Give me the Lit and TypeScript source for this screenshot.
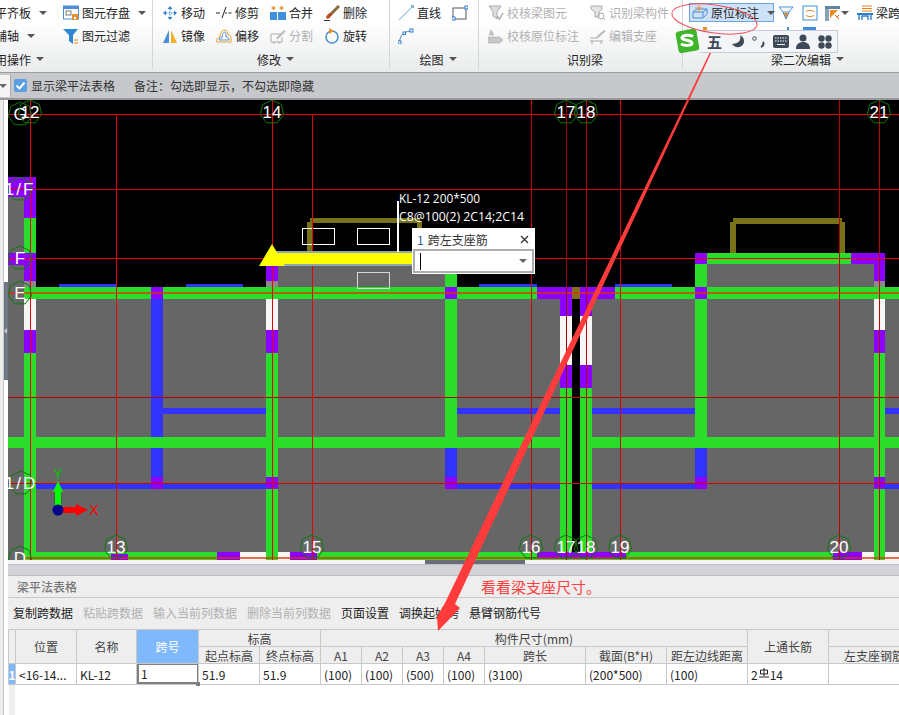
import { LitElement, css, html, svg } from 'lit';
import { customElement } from 'lit/decorators.js';

const G = '#2bdc2b';
const P = '#8c00ff';
const B = '#3333ff';
const W = '#f6f6f6';
const K = '#8a8a8a';
const Y = '#7a7218';

// x, y, w, h, fill in page coordinates
const blocks: [number, number, number, number, string][] = [
  // concrete
  [8, 197, 16, 363, '#666'], [24, 287, 548, 273, '#666'], [580, 287, 319, 273, '#666'],
  [278, 264, 167, 24, '#666'], [707, 264, 167, 24, '#666'],
  // olive frames
  [307, 222, 5, 30, Y], [310, 218, 110, 5, Y], [417, 222, 5, 30, Y],
  [730, 222, 6, 31, Y], [733, 218, 109, 6, Y], [839, 222, 6, 31, Y],
  // blue caps over beam E
  [59, 284, 57, 3, B], [186, 284, 57, 3, B], [479, 284, 58, 3, B], [615, 284, 57, 3, B],
  // main beams
  [24, 287, 875, 12, G], [8, 437, 552, 11, G], [592, 437, 307, 11, G], [24, 552, 875, 8, G],
  [707, 253, 144, 11, G],
  // column at 24
  [8, 177, 28, 20, P], [24, 197, 12, 21, P], [24, 218, 12, 35, G], [8, 253, 28, 12, P], [24, 265, 12, 16, P],
  [24, 281, 12, 6, K], [24, 299, 12, 31, W], [24, 330, 12, 23, P], [24, 353, 12, 199, G],
  // column at 151
  [151, 287, 12, 12, P], [151, 299, 12, 138, B], [151, 448, 12, 29, B], [151, 477, 12, 12, P],
  // column at 266
  [266, 265, 12, 16, P], [266, 281, 12, 6, K], [266, 299, 12, 31, W], [266, 330, 12, 23, P],
  [266, 353, 12, 124, G], [266, 477, 12, 12, P], [266, 489, 12, 63, G],
  // column at 445
  [445, 264, 12, 23, G], [445, 287, 12, 12, P], [445, 299, 12, 138, G], [445, 448, 12, 29, B], [445, 477, 12, 12, P],
  // twin columns on the channel
  [537, 287, 35, 12, P], [580, 287, 35, 12, P], [572, 287, 8, 12, '#807020'],
  [560, 299, 12, 17, P], [560, 316, 12, 49, W], [560, 365, 12, 23, P], [560, 388, 12, 164, G],
  [580, 299, 12, 17, P], [580, 316, 12, 49, W], [580, 365, 12, 23, P], [580, 388, 12, 164, G],
  // column at 695
  [695, 253, 12, 11, P], [695, 264, 12, 23, G], [695, 287, 12, 12, P], [695, 299, 12, 138, G],
  [695, 448, 12, 29, B], [695, 477, 12, 12, P],
  // column at 874
  [851, 253, 34, 11, P], [874, 264, 11, 17, P], [874, 281, 11, 6, K], [874, 299, 11, 31, W],
  [874, 330, 11, 23, P], [874, 353, 11, 124, G], [874, 477, 11, 12, P], [874, 489, 11, 63, G],
  // thin blue beams
  [163, 408, 103, 6, B], [457, 408, 103, 6, B], [592, 408, 103, 6, B], [885, 408, 14, 6, B],
  [36, 483, 115, 6, B], [163, 483, 103, 6, B], [457, 483, 103, 6, B], [592, 483, 103, 6, B], [885, 483, 14, 6, B],
  // bottom edge pieces
  [111, 554, 17, 6, P], [217, 552, 23, 8, P], [240, 552, 26, 8, W], [278, 552, 12, 8, W], [290, 552, 27, 8, P],
  [537, 552, 89, 7, P], [833, 552, 29, 8, P], [862, 552, 12, 8, W], [885, 552, 14, 8, W],
];

const hLines: [number, string][] = [
  [114, '#f00000'], [189, '#d80000'], [258, '#f00000'], [397, '#b00000'], [483, '#d00000'],
];
const vLines: [number, number, string][] = [
  [30, 100, '#e80000'], [116, 114, '#e80000'], [272, 100, '#e80000'], [312, 114, '#e80000'], [531, 100, '#c80000'],
  [566, 100, '#980000'], [586, 100, '#c00000'], [620, 100, '#d00000'], [839, 100, '#b80000'], [879, 100, '#c00000'],
];

const bubbles: [string, number, number][] = [
  ['G', 20, 114], ['12', 30, 112], ['14', 272, 112], ['17', 566, 112], ['18', 586, 112], ['21', 879, 112],
  ['1/F', 20, 189], ['F', 20, 258], ['E', 20, 293], ['1/D', 21, 483], ['D', 20, 558],
  ['13', 116, 547], ['15', 312, 547], ['16', 531, 547], ['17', 566, 547], ['18', 586, 547], ['19', 620, 547], ['20', 839, 547],
];

const hept = (cx: number, cy: number, r = 12) =>
  Array.from({ length: 7 }, (_, i) => {
    const a = -Math.PI / 2 + (i * 2 * Math.PI) / 7;
    return `${(cx + r * Math.cos(a)).toFixed(1)},${(cy + r * Math.sin(a)).toFixed(1)}`;
  }).join(' ');

const ic = (body: unknown, size = 16) =>
  html`<svg class="ic" width=${size} height=${size} viewBox="0 0 16 16" fill="none">${body}</svg>`;

const icons: Record<string, unknown> = {
  save: ic(svg`<rect x=".5" y="1" width="15" height="13" fill="#fff" stroke="#4a8fd8"/><rect x=".5" y="1" width="15" height="3" fill="#4a8fd8"/><rect x="3" y="6" width="5" height="4" stroke="#7a7a7a"/><rect x="9" y="9" width="6" height="6" fill="#e8912d"/><rect x="11" y="12" width="2" height="2" fill="#fff"/>`),
  filter: ic(svg`<path d="M0 1h15l-5 6v9l-4-3V7z" fill="#2f86d6"/><path d="M11 12h4M11 15h4" stroke="#f08a1c"/>`),
  move: ic(svg`<path d="M8 1l2.500 3h-5zM8 15l2.500-3h-5zM1 8l3-2.500v5zM15 8l-3-2.500v5z" fill="#2f7fd0"/><path d="M8 4v8M4 8h8" stroke="#2f7fd0" stroke-dasharray="1.500 1"/>`),
  trim: ic(svg`<path d="M0 8h4M6 13l4-11M9 8h2M12.500 8h3" stroke="#222"/>`),
  merge: ic(svg`<rect x="0" y="7" width="7" height="8" fill="#3f8fdc"/><rect x="8" y="7" width="8" height="8" fill="#3f8fdc"/><path d="M3.500 1v4M1.500 3h4M11.500 1v4M9.500 3h4" stroke="#e8912d" stroke-width="1.400"/>`),
  del: ic(svg`<path d="M15 1L6 10" stroke="#8a6a3a" stroke-width="3"/><path d="M6 8l2 2-3 3.500H2c0-2 1-4 4-5.500z" fill="#c0481c"/><path d="M0 15.500h6" stroke="#333"/>`),
  mirror: ic(svg`<path d="M7 2v13H1z" fill="#4a8fd8"/><path d="M9 2v13h6z" fill="#f4b024"/>`),
  offset: ic(svg`<path d="M1 14c-1-3 1-5 3-5 0-4 2-7 5-7 2 0 3 2 3 5 2 0 3 1 3 3v4z" stroke="#e8a020" fill="#fff"/><path d="M3 12c0-2 1-2 3-2 0-3 1-6 3-6 1 0 1 2 1 5 2 0 3 0 3 3z" stroke="#4a8fd8"/>`),
  split: ic(svg`<path d="M1 6h10M1 6v8h11V9M4 14v2M9 14v2" stroke="#aaa"/><path d="M6 10l8-8 1.500 1.500-8 8z" fill="#bbb"/>`),
  rotate: ic(svg`<circle cx="8" cy="9" r="6" stroke="#4a90d9" stroke-width="1.500"/><path d="M5 0l5 3-5 3z" fill="#f09020"/>`),
  line: ic(svg`<path d="M1 15L14 2" stroke="#a8c6e4" stroke-width="1.200"/><rect x="13" y="0" width="3" height="3" fill="#8ab4dc"/>`),
  arc: ic(svg`<path d="M1.500 14C2 8 5 4 12 3" stroke="#4a7fb8"/><rect x="0" y="13" width="3" height="3" fill="#fff" stroke="#2f7fd0"/><rect x="5" y="4" width="2.500" height="2.500" fill="#fff" stroke="#2f7fd0"/><rect x="12" y="1" width="3" height="3" fill="#fff" stroke="#2f7fd0"/>`),
  rect: ic(svg`<rect x="1" y="3" width="13" height="11" stroke="#556"/><rect x="0" y="12" width="3" height="3" fill="#fff" stroke="#2f7fd0"/><rect x="13" y="1" width="3" height="3" fill="#fff" stroke="#2f7fd0"/>`),
  chk1: ic(svg`<path d="M1 1h12l-4 6v7l-4-3V7z" stroke="#aaa" fill="#ddd"/><path d="M9 11l2.500 3L15 8" stroke="#aaa" stroke-width="1.400"/>`),
  chk2: ic(svg`<path d="M1 1h11v3l-3 3v5H5V7L1 4z" stroke="#aaa" fill="#e4e4e4"/><circle cx="11" cy="11" r="3" stroke="#aaa"/><path d="M13 13l2 2" stroke="#aaa"/>`),
  chk3: ic(svg`<path d="M3 2l3 5H1zM0 9h12l3 3-3 3H0z" fill="#c8c8c8" stroke="#aaa" stroke-width=".6"/>`),
  edit: ic(svg`<path d="M0 10h7M0 13h13M2 13v3M11 13v3" stroke="#aaa"/><path d="M6 9l8-7 1.500 1.500-8 7z" fill="#bbb"/>`),
  mark: ic(svg`<path d="M1 7l4-3h10v5l-4 4H1z" fill="#cfe0f2" stroke="#4a8fd8"/><path d="M1 7h10v6M11 7l4-3" stroke="#4a8fd8"/><path d="M7 0v7M3 3h8" stroke="#e8912d"/>`),
  funnel: ic(svg`<path d="M1 2h14l-4 5H5z" fill="#fff" stroke="#4a8fd8"/><path d="M5 8h6l-3 6z" fill="#f08a1c"/><path d="M5 7l3 7 3-7" stroke="#4a8fd8"/>`),
  box: ic(svg`<rect x="1" y="1" width="14" height="14" fill="#fff" stroke="#3f8fdc"/><path d="M4 7c0-2 8-2 8 0M4 10c0 2 8 2 8 0" stroke="#e8801c"/>`),
  corner: ic(svg`<rect x="0" y="1" width="4" height="15" fill="#8aa2b8"/><rect x="0" y="1" width="15" height="3" fill="#5f84a4"/><path d="M5 5h8L5 13z" fill="#f08a1c"/><path d="M10 10l4 4M14 10l-2 2" stroke="#e8601c"/>`),
  span: ic(svg`<path d="M5 1h10M5 3.500h10M5 6h10" stroke="#e8801c"/><path d="M0 9h16" stroke="#2f7fd0" stroke-width="2"/><path d="M2 9v6M5 15V11h6v4M14 9v6" stroke="#2f7fd0" stroke-width="1.400"/>`),
};

const tool = (icon: string, label: string, dim = false) => html`
  <div class="tool ${dim ? 'dim' : ''}">${icons[icon]}<span>${label}</span></div>
`;
const caret = html`<i class="caret"></i>`;

@customElement('app-root')
export class AppRoot extends LitElement {
  static styles = css`
    :host {
      display: block;
      position: relative;
      width: 899px;
      height: 715px;
      overflow: hidden;
      background: #fff;
      font-family: "Noto Sans CJK SC", "Liberation Sans", sans-serif;
      font-size: 12px;
      color: #222;
    }
    .page { display: flex; flex-direction: column; height: 100%; }

    /* ribbon */
    .ribbon {
      display: flex;
      flex: none;
      height: 72px;
      background: linear-gradient(#fff 30%, #e9ebec);
      border-bottom: 1px solid #9b9da1;
      overflow: hidden;
    }
    .group {
      flex: none;
      box-sizing: border-box;
      height: 69px;
      padding-top: 1px;
      border-right: 1px solid #d4d6d8;
    }
    .g1 { width: 153px; }
    .g2 { width: 237px; padding-left: 9px; }
    .g3 { width: 89px; padding-left: 8px; }
    .g4 { width: 204px; padding-left: 9px; }
    .g5 { width: 216px; border-right: 0; padding-top: 2px; white-space: nowrap; }
    .tools { display: grid; grid-auto-rows: 23px; height: 47px; }
    .g1 .tools { grid-template-columns: 68px 90px; margin-left: -5px; }
    .g2 .tools { grid-template-columns: repeat(4, 54px); }
    .g3 .tools { grid-template-columns: repeat(2, 54px); }
    .g4 .tools { grid-template-columns: repeat(2, 102px); }
    .tool { display: flex; align-items: center; gap: 3px; white-space: nowrap; height: 23px; }
    .tool.dim { color: #b0b0b0; }
    .ic { flex: none; display: block; }
    .caret {
      display: inline-block;
      flex: none;
      width: 0;
      height: 0;
      margin-left: 5px;
      border: 4px solid transparent;
      border-top: 4px solid #555;
      border-bottom: 0;
    }
    .group-label {
      display: flex;
      justify-content: center;
      align-items: center;
      height: 22px;
    }
    .g1 .group-label { justify-content: flex-start; margin-left: -5px; }
    .g5 .group-label { padding-left: 33px; }
    .row5 { display: flex; align-items: center; height: 21px; }
    .active {
      display: flex;
      flex: none;
      align-items: center;
      gap: 3px;
      box-sizing: border-box;
      width: 85px;
      height: 19px;
      margin: 0 4px 0 6px;
      padding-left: 2px;
      background: #cde2f8;
      border: 1px solid #6aa5e4;
    }
    .row5 > .ic { margin-right: 8px; }
    .row5 > .ic:nth-of-type(2) { margin-right: 7px; }
    .row5 > .ic:nth-of-type(3) { margin-right: 0; }
    .row5 > .ic:nth-of-type(4) { margin-right: 3px; }
    .row5 > .caret { margin: 0 8px 0 0; }
    .active .caret { margin-left: 5px; }
    .peek { display: flex; gap: 0; height: 25px; padding: 4px 0 0 20px; box-sizing: border-box; }
    .peek i { display: block; height: 4px; }
    .peek .orange { width: 4px; background: #f09020; margin-right: 80px; }
    .peek .blue { width: 2px; background: #3f8fdc; margin-right: 14px; }
    .peek .wide { width: 13px; background: #3f8fdc; }

    /* option bar */
    .options {
      display: flex;
      flex: none;
      align-items: center;
      height: 25px;
      background: #c6c8cc;
      border-bottom: 2px solid #96989c;
      color: #333;
    }
    .combo {
      display: flex;
      align-items: center;
      width: 10px;
      height: 22px;
      background: #f4f4f4;
      border-right: 1px solid #aaa;
    }
    .combo .caret { margin-left: -1px; border-top-color: #666; }
    .check {
      display: flex;
      align-items: center;
      justify-content: center;
      width: 13px;
      height: 13px;
      margin: 0 4px 0 3px;
      background: #5b9ee6;
      border-radius: 2px;
    }
    .note { margin-left: 19px; }

    /* workspace */
    .work { display: flex; flex: none; height: 464px; }
    .strip {
      flex: none;
      position: relative;
      width: 8px;
      background: #fff;
    }
    .strip::before {
      content: "";
      position: absolute;
      left: 0;
      top: 0;
      bottom: 0;
      width: 3px;
      background: #ececec;
      border-right: 1px solid #c8c8c8;
    }
    .grip {
      position: absolute;
      left: 4px;
      top: 182px;
      width: 4px;
      height: 98px;
      background: #6d7785;
      display: flex;
      align-items: center;
    }
    .grip i {
      border: 3px solid transparent;
      border-right: 3px solid #c8ccd2;
      border-left: 0;
    }
    .stage { position: relative; flex: none; width: 891px; }
    .stage > svg { display: block; }
    .cad-label { font-family: "Liberation Sans", sans-serif; font-size: 17px; fill: #fff; }
    .cad-label.wide { letter-spacing: 2px; }
    .note-label { font-family: "Open Sans", "Liberation Sans", sans-serif; font-size: 12px; fill: #fff; }
    .axis-label { font-family: "Liberation Sans", sans-serif; font-size: 14px; }
    .hscroll { height: 4px; background: #f4f4f4; position: relative; }
    .thumb { position: absolute; left: 417px; top: 0; width: 100px; height: 4px; background: #6a6e78; }

    .popup {
      position: absolute;
      left: 404px;
      top: 128px;
      box-sizing: border-box;
      width: 123px;
      height: 46px;
      padding: 1px;
      background: #fff;
    }
    .popup-title {
      display: flex;
      align-items: center;
      justify-content: space-between;
      height: 20px;
      padding: 0 5px 0 4px;
      color: #333;
    }
    .popup-title b { font-weight: 400; color: #2a5f9a; margin-right: 4px; }
    .popup-input {
      display: flex;
      align-items: center;
      justify-content: space-between;
      box-sizing: border-box;
      height: 24px;
      padding: 0 5px;
      border: 2px solid #adadad;
      background: #fff;
    }
    .cursor { width: 1px; height: 17px; background: #000; }
    .popup-input .caret { border-top-color: #666; }

    /* table panel */
    .lower { display: flex; flex: 1; min-height: 0; }
    .panel {
      flex: none;
      display: flex;
      flex-direction: column;
      width: 891px;
      overflow: hidden;
      background: #fff;
    }
    .band { flex: none; height: 10px; background: #d3d4d9; border-top: 1px solid #bcbcbc; border-bottom: 1px solid #bcbcbc; }
    .title {
      display: flex;
      flex: none;
      align-items: center;
      height: 21px;
      padding-left: 9px;
      background: #eee;
      border-bottom: 1px solid #c8c8c8;
      color: #777;
      font-weight: 500;
    }
    .remark { margin-left: 404px; font-size: 15px; font-weight: 400; color: #ff4040; }
    .actions {
      display: flex;
      flex: none;
      align-items: center;
      gap: 10px;
      box-sizing: border-box;
      height: 31px;
      padding: 0 0 2px 5px;
      background: #eee;
    }
    .actions .off { color: #b0b0b0; }
    .sheet {
      display: grid;
      flex: none;
      grid-template-columns: 6px 60px 59px 61px 60px 60px 40px 40px 40px 40px 100px 80px 80px 80px 80px;
      grid-template-rows: 16px 16px 20px;
      gap: 1px;
      width: max-content;
      padding: 1px 0 1px 1px;
      background: #c8c8c8;
    }
    .sheet > div {
      display: flex;
      align-items: center;
      justify-content: center;
      background: #eee;
      color: #444;
      white-space: nowrap;
      overflow: hidden;
    }
    .sheet .span2 { grid-row: span 2; }
    .sheet .selected { background: #7fb8fb; color: #fff; }
    .sheet .head2 { grid-column: span 2; }
    .sheet .head7 { grid-column: span 7; }
    .sheet .clip { justify-content: flex-start; padding-left: 15px; }
    .sheet .cell { justify-content: flex-start; padding-left: 3px; background: #fff; color: #222; }
    .sheet .mark { background: #7fb8fb; color: #fff; font-weight: 700; }
    .sheet .current { position: relative; overflow: visible; box-shadow: inset 0 0 0 1px #808080; border-bottom: 1px solid #808080; border-left: 1px solid #808080; }
    .sheet .current::after {
      content: "";
      position: absolute;
      right: -2px;
      bottom: -3px;
      width: 4px;
      height: 4px;
      background: #808080;
    }
    .rebar { margin: 0 1px 2px; }
    .tail { flex: 1; }
    .tail i { display: block; width: 6px; height: 100%; margin-left: 1px; background: #eee; }

    /* overlays */
    .layer { position: absolute; left: 0; top: 0; pointer-events: none; }
    .ime {
      position: absolute;
      left: 675px;
      top: 28px;
      display: flex;
      align-items: flex-start;
    }
    .ime-logo { flex: none; display: block; }
    .ime-bar {
      display: flex;
      align-items: center;
      gap: 6.5px;
      box-sizing: border-box;
      height: 23px;
      width: 138px;
      margin: 2px 0 0 0;
      padding-left: 7px;
      background: #f3f5f8;
      border: 1px solid #c6ccd6;
      border-left: 0;
    }
    .ime-bar span { font-size: 15px; font-weight: 700; color: #3f4a58; width: 16px; }
  `;

  private renderCad() {
    return html`
      <svg width="891" height="460" viewBox="8 100 891 460">
        <rect x="8" y="100" width="891" height="460" fill="#000"></rect>
        ${blocks.map(([x, y, w, h, f]) => svg`<rect x=${x} y=${y} width=${w} height=${h} fill=${f}></rect>`)}
        <rect x="302.500" y="228.500" width="32" height="16" fill="none" stroke="#fff"></rect>
        <rect x="357.500" y="228.500" width="32" height="16" fill="none" stroke="#fff"></rect>
        <rect x="357.500" y="272.500" width="32" height="16" fill="none" stroke="#d8d8d8"></rect>
        ${hLines.map(([y, c]) => svg`<rect x="8" y=${y} width="891" height="1" fill=${c}></rect>`)}
        <rect x="8" y="292" width="891" height="2" fill="#e03000" opacity=".7"></rect>
        <rect x="24" y="557" width="875" height="2" fill="#e03000" opacity=".7"></rect>
        ${vLines.map(([x, y, c]) => svg`<rect x=${x} y=${y} width="1" height=${560 - y} fill=${c}></rect>`)}
        <rect x="272" y="251" width="140" height="15" fill="#8fa8b0"></rect>
        <rect x="272" y="253" width="140" height="11" fill="#ff0"></rect>
        <path d="M272 244L285 266H259z" fill="#ff0"></path>
        <rect x="397" y="201" width="2" height="51" fill="#fff"></rect>
        <text class="note-label" x="399" y="203" textLength="81" lengthAdjust="spacingAndGlyphs">KL-12 200*500</text>
        <text class="note-label" x="399" y="221" textLength="125" lengthAdjust="spacingAndGlyphs">C8@100(2) 2C14;2C14</text>
        ${bubbles.map(([t, x, y]) => svg`
          <polygon points=${hept(x, y)} fill="none" stroke="#0c7a0c"></polygon>
          <text class="cad-label ${t.includes('/') ? 'wide' : ''}" x=${x} y=${y + 6} text-anchor="middle">${t}</text>
        `)}
        <rect x="54" y="491" width="8" height="15" fill="#555"></rect>
        <rect x="55" y="490" width="6" height="16" fill="#0f0"></rect>
        <path d="M58 481l5 11H53z" fill="#0f0"></path>
        <rect x="63" y="507" width="14" height="6" fill="#f00"></rect>
        <path d="M88 510l-12-6v12z" fill="#f00"></path>
        <circle cx="58" cy="510" r="5.500" fill="#00008b"></circle>
        <text class="axis-label" x="58" y="479" text-anchor="middle" fill="#0c0">Y</text>
        <text class="axis-label" x="94" y="515" text-anchor="middle" fill="#f00">X</text>
      </svg>
    `;
  }

  render() {
    const heads = ['A1', 'A2', 'A3', 'A4', '跨长', '截面(B*H)', '距左边线距离'];
    const values = ['(100)', '(100)', '(500)', '(100)', '(3100)', '(200*500)', '(100)'];
    return html`
      <div class="page">
        <div class="ribbon">
          <div class="group g1">
            <div class="tools">
              <div class="tool"><span>平齐板</span>${caret}</div>
              <div class="tool">${icons.save}<span>图元存盘</span>${caret}</div>
              <div class="tool"><span>辅轴</span>${caret}</div>
              ${tool('filter', '图元过滤')}
            </div>
            <div class="group-label">用操作${caret}</div>
          </div>
          <div class="group g2">
            <div class="tools">
              ${tool('move', '移动')}${tool('trim', '修剪')}${tool('merge', '合并')}${tool('del', '删除')}
              ${tool('mirror', '镜像')}${tool('offset', '偏移')}${tool('split', '分割', true)}${tool('rotate', '旋转')}
            </div>
            <div class="group-label">修改${caret}</div>
          </div>
          <div class="group g3">
            <div class="tools">
              ${tool('line', '直线')}<div class="tool">${icons.rect}</div>
              <div class="tool">${icons.arc}</div>
            </div>
            <div class="group-label">绘图${caret}</div>
          </div>
          <div class="group g4">
            <div class="tools">
              ${tool('chk1', '校核梁图元', true)}${tool('chk2', '识别梁构件', true)}
              ${tool('chk3', '校核原位标注', true)}${tool('edit', '编辑支座', true)}
            </div>
            <div class="group-label">识别梁</div>
          </div>
          <div class="group g5">
            <div class="row5">
              <div class="active">${icons.mark}<span>原位标注</span>${caret}</div>
              ${icons.funnel}${icons.box}${icons.corner}${caret}${icons.span}<span>梁跨</span>
            </div>
            <div class="peek"><i class="orange"></i><i class="blue"></i><i class="wide"></i></div>
            <div class="group-label">梁二次编辑${caret}</div>
          </div>
        </div>

        <div class="options">
          <div class="combo">${caret}</div>
          <div class="check">
            <svg width="11" height="11" viewBox="0 0 11 11" fill="none"><path d="M1.500 5.500l3 3 5-6" stroke="#fff" stroke-width="2"></path></svg>
          </div>
          <span>显示梁平法表格</span>
          <span class="note">备注：勾选即显示，不勾选即隐藏</span>
        </div>

        <div class="work">
          <div class="strip"><div class="grip"><i></i></div></div>
          <div class="stage">
            ${this.renderCad()}
            <div class="hscroll"><div class="thumb"></div></div>
            <div class="popup">
              <div class="popup-title">
                <span><b>1</b>跨左支座筋</span>
                <svg width="9" height="9" viewBox="0 0 9 9"><path d="M1 1l7 7M8 1l-7 7" stroke="#333" stroke-width="1.300"></path></svg>
              </div>
              <div class="popup-input"><i class="cursor"></i>${caret}</div>
            </div>
          </div>
        </div>

        <div class="lower">
          <div class="strip"></div>
          <div class="panel">
            <div class="band"></div>
            <div class="title"><span>梁平法表格</span><span class="remark">看看梁支座尺寸。</span></div>
            <div class="actions">
              <span>复制跨数据</span>
              <span class="off">粘贴跨数据</span>
              <span class="off">输入当前列数据</span>
              <span class="off">删除当前列数据</span>
              <span>页面设置</span>
              <span>调换起始跨</span>
              <span>悬臂钢筋代号</span>
            </div>
            <div class="sheet">
              <div class="span2"></div>
              <div class="span2">位置</div>
              <div class="span2">名称</div>
              <div class="span2 selected">跨号</div>
              <div class="head2">标高</div>
              <div class="head7">构件尺寸(mm)</div>
              <div class="span2">上通长筋</div>
              <div></div>
              <div>起点标高</div>
              <div>终点标高</div>
              ${heads.map((h) => html`<div>${h}</div>`)}
              <div class="clip">左支座钢筋</div>
              <div class="mark">1</div>
              <div class="cell">&lt;16-14...</div>
              <div class="cell">KL-12</div>
              <div class="cell current">1</div>
              <div class="cell">51.9</div>
              <div class="cell">51.9</div>
              ${values.map((v) => html`<div class="cell">${v}</div>`)}
              <div class="cell">
                2<svg class="rebar" width="10" height="10" viewBox="0 0 10 10" fill="none"><path d="M1.500 2h7v4h-7zM5 0v8M0 9h10" stroke="#222"></path></svg>14
              </div>
              <div class="cell"></div>
            </div>
            <div class="tail"><i></i></div>
          </div>
        </div>
      </div>

      <svg class="layer" width="899" height="715" viewBox="0 0 899 715">
        <polygon points="711,50 712,51 455,604 460,608 438,631 437,617 445,603" fill="#ff3b3b"></polygon>
      </svg>

      <div class="ime">
        <svg class="ime-logo" width="25" height="26" viewBox="0 0 25 26">
          <rect x="2" y="2" width="21" height="22" rx="3" fill="#3fb52a" transform="rotate(-10 12 13)"></rect>
          <path d="M18 8.500c-3-2-10-1.500-11 1-1 3 10 2.500 10 5.500s-7 3-11 1" stroke="#fff" stroke-width="3" fill="none"></path>
        </svg>
        <div class="ime-bar">
          <span>五</span>
          <svg width="15" height="15" viewBox="0 0 15 15"><path d="M10 1c2 5-2 9-8 9 3 5 12 4 12-3 0-3-2-5-4-6z" fill="#3f4a58"></path></svg>
          <svg width="15" height="15" viewBox="0 0 15 15" fill="none"><circle cx="3.500" cy="4.500" r="1.800" stroke="#3f4a58"></circle><path d="M12 8c1 2 0 4-2 5" stroke="#3f4a58" stroke-width="2"></path></svg>
          <svg width="16" height="13" viewBox="0 0 16 13"><rect width="16" height="13" rx="2" fill="#3f4a58"></rect><path d="M2 3h12M2 6h12" stroke="#f3f5f8" stroke-dasharray="1.500 1"></path><path d="M4 9.500h8" stroke="#f3f5f8"></path></svg>
          <svg width="16" height="15" viewBox="0 0 16 15"><circle cx="8" cy="4" r="3.500" fill="#3f4a58"></circle><path d="M1 15c0-5 3-7 7-7s7 2 7 7z" fill="#3f4a58"></path></svg>
          <svg width="14" height="14" viewBox="0 0 14 14" fill="#3f4a58"><circle cx="3.500" cy="3.500" r="3.200"></circle><circle cx="10.500" cy="3.500" r="3.200"></circle><circle cx="3.500" cy="10.500" r="3.200"></circle><circle cx="10.500" cy="10.500" r="3.200"></circle></svg>
        </div>
      </div>

      <svg class="layer" width="899" height="715" viewBox="0 0 899 715">
        <ellipse cx="714.500" cy="19" rx="43" ry="14" fill="none" stroke="#f0505a" transform="rotate(8 714.500 19)"></ellipse>
      </svg>
    `;
  }
}
